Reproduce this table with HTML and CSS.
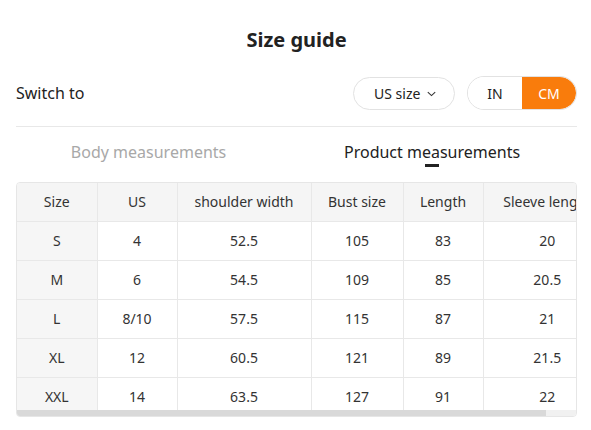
FILE: index.html
```html
<!DOCTYPE html>
<html lang="en">
<head>
<meta charset="utf-8">
<title>Size guide</title>
<link rel="stylesheet" href="styles.css">
</head>
<body>
<div class="page">
  <h1 class="title">Size guide</h1>
  <div class="toolbar">
    <span class="switch-label">Switch to</span>
    <div class="controls">
      <button class="pill size-select">US size
        <svg class="chev" width="9" height="6" viewBox="0 0 9 6"><path d="M0.8 1.2 L4.5 4.6 L8.2 1.2" fill="none" stroke="#333" stroke-width="1.1"/></svg>
      </button>
      <div class="unit-toggle">
        <button class="unit">IN</button>
        <button class="unit active">CM</button>
      </div>
    </div>
  </div>
  <div class="tabs">
    <div class="tab">Body measurements</div>
    <div class="tab active">Product measurements</div>
  </div>
  <div class="table-frame">
    <div class="table-wrap">
      <table class="size-table">
        <colgroup>
          <col style="width:80px"><col style="width:80px"><col style="width:134px"><col style="width:92px"><col style="width:80px"><col style="width:128px">
        </colgroup>
        <thead>
          <tr><th>Size</th><th>US</th><th>shoulder width</th><th>Bust size</th><th>Length</th><th>Sleeve length</th></tr>
        </thead>
        <tbody>
          <tr><td>S</td><td>4</td><td>52.5</td><td>105</td><td>83</td><td>20</td></tr>
          <tr><td>M</td><td>6</td><td>54.5</td><td>109</td><td>85</td><td>20.5</td></tr>
          <tr><td>L</td><td>8/10</td><td>57.5</td><td>115</td><td>87</td><td>21</td></tr>
          <tr><td>XL</td><td>12</td><td>60.5</td><td>121</td><td>89</td><td>21.5</td></tr>
          <tr><td>XXL</td><td>14</td><td>63.5</td><td>127</td><td>91</td><td>22</td></tr>
        </tbody>
      </table>
    </div>
    <div class="hscroll"><div class="hscroll-thumb"></div></div>
  </div>
</div>
</body>
</html>
```

FILE: styles.css
```css
* { box-sizing: border-box; }
html, body { margin: 0; padding: 0; background: #fff; }
body {
  font-family: "Segoe UI", "Noto Sans", "Open Sans", sans-serif;
  color: #222;
}
.page {
  width: 591px;
  padding: 0 14px 0 16px;
}
.title {
  margin: 26px 0 0;
  height: 28px;
  line-height: 28px;
  font-size: 20px;
  font-weight: 700;
  text-align: center;
  color: #222;
}
.toolbar {
  margin-top: 22px;
  height: 34px;
  display: flex;
  align-items: center;
  justify-content: space-between;
}
.switch-label {
  font-size: 16px;
  color: #222;
}
.controls {
  display: flex;
  align-items: center;
  gap: 12px;
}
button {
  font-family: inherit;
  cursor: pointer;
}
.pill {
  height: 33px;
  border: 1px solid #e2e2e2;
  border-radius: 17px;
  background: #fff;
  font-size: 14px;
  color: #222;
  padding: 0 17px 0 20px;
  display: flex;
  align-items: center;
  gap: 7px;
  width: 102px;
}
.chev { display: block; margin-top: 1px; }
.unit-toggle {
  display: flex;
  width: 110px;
  height: 34px;
  border: 1px solid #e2e2e2;
  border-radius: 17px;
  overflow: hidden;
}
.unit {
  flex: 1;
  border: 0;
  background: #fff;
  font-size: 14px;
  color: #222;
  padding: 0;
}
.unit.active {
  background: #f97c0c;
  color: #fff;
  border-radius: 0 17px 17px 0;
}
.tabs {
  margin-top: 16px;
  border-top: 1px solid #e8e8e8;
  padding: 14px 2px 0 0;
  display: flex;
  justify-content: space-around;
}
.tab {
  font-size: 16px;
  line-height: 22px;
  color: #a8a8a8;
  display: flex;
  flex-direction: column;
  align-items: center;
}
.tab:first-child { margin-right: 8px; }
.tab.active { color: #222; }
.tab.active::after {
  content: "";
  width: 14px;
  height: 3px;
  margin-top: 1px;
  background: #222;
}
.tab:not(.active)::after {
  content: "";
  height: 3px;
  margin-top: 1px;
}
.table-frame {
  position: relative;
  margin-top: 15px;
  height: 235px;
  border: 1px solid #e6e6e6;
  border-radius: 4px;
  overflow: hidden;
}
.table-wrap {
  height: 100%;
  overflow-x: auto;
  overflow-y: hidden;
  scrollbar-width: none;
}
.table-wrap::-webkit-scrollbar { display: none; }
.hscroll {
  position: absolute;
  left: 0;
  right: 0;
  bottom: 0;
  height: 6px;
  background: #f1f1f1;
}
.hscroll-thumb {
  width: 529px;
  height: 100%;
  background: #d9d9d9;
}
.size-table {
  border-collapse: collapse;
  table-layout: fixed;
  width: 594px;
  font-size: 14px;
  color: #333;
}
.size-table th, .size-table td {
  height: 39px;
  padding: 0;
  text-align: center;
  font-weight: 400;
  white-space: nowrap;
  overflow: hidden;
  border-right: 1px solid #e8e8e8;
  border-bottom: 1px solid #e8e8e8;
}
.size-table th {
  background: #f5f5f5;
  color: #333;
  height: 38px;
}
.size-table td:first-child { background: #f6f6f6; }
.size-table tr > *:last-child { border-right: 0; }
```
